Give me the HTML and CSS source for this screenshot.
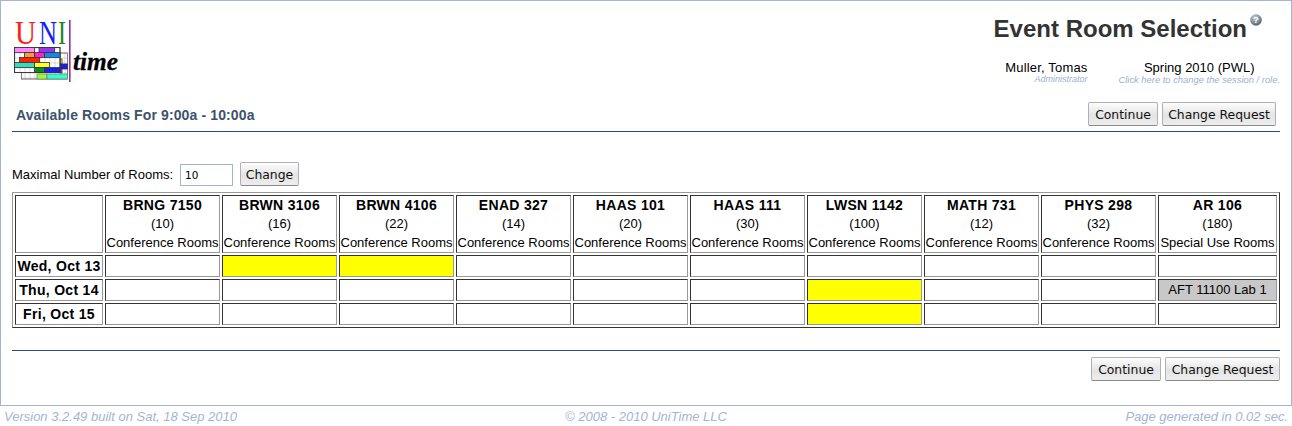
FILE: index.html
```html
<!DOCTYPE html>
<html lang="en">
<head>
<meta charset="utf-8">
<title>Event Room Selection</title>
<link rel="stylesheet" href="styles.css">
</head>
<body>
<div class="frame">
  <header class="top">
    <svg class="logo" width="110" height="72" viewBox="0 -8 110 72">
      <defs>
        <pattern id="cell" width="5" height="5" patternUnits="userSpaceOnUse" x="0.5" y="2.5">
          <path d="M0 0H5M0 0V5" stroke="#999" stroke-width=".7" fill="none"/>
        </pattern>
      </defs>
      <text x="1" y="24" class="uni" fill="#ff2010" textLength="21" lengthAdjust="spacingAndGlyphs">U</text>
      <text x="25" y="24" class="uni" fill="#1020ff" textLength="18" lengthAdjust="spacingAndGlyphs">N</text>
      <text x="44" y="24" class="uni" fill="#1a8a1a" textLength="8" lengthAdjust="spacingAndGlyphs">I</text>
      <rect x="55" y="0" width="1.6" height="62" fill="#8e33a8"/>
      <text x="59" y="50" class="time" textLength="45" lengthAdjust="spacingAndGlyphs">time</text>
      <g stroke="#777" stroke-width=".7">
        <rect x="7.5" y="33" width="46" height="26" fill="#fff"/>
        <rect x="7.5" y="33" width="46" height="26" fill="url(#cell)"/>
        <rect x="23" y="54" width="10" height="5" fill="#9f3"/>
        <rect x="33" y="54" width="20.500" height="5" fill="#3fc"/>
      </g>
      <g stroke="#333" stroke-width=".8">
        <rect x="46" y="39" width="2" height="5" fill="#ff2"/>
        <rect x="46" y="44" width="7.500" height="5" fill="#12e"/>
        <rect x="46" y="49" width="2" height="4" fill="#f2c"/>
        <rect x="0.500" y="27.500" width="45.500" height="25" fill="#fff"/>
        <rect x="0.500" y="27.500" width="45.500" height="25" fill="url(#cell)"/>
        <rect x="0.500" y="27.500" width="20" height="5" fill="#f8f"/>
        <rect x="25" y="27.500" width="15.500" height="5" fill="#93e"/>
        <rect x="10.500" y="32.500" width="10" height="5" fill="#f93"/>
        <rect x="20.500" y="32.500" width="10" height="5" fill="#f2c"/>
        <rect x="30.500" y="32.500" width="15.500" height="5" fill="#18e"/>
        <rect x="5.500" y="37.500" width="20" height="5" fill="#f20"/>
        <rect x="0.500" y="42.500" width="20" height="5" fill="#3db"/>
        <rect x="20.500" y="42.500" width="15" height="5" fill="#ff2"/>
        <rect x="20.500" y="47.500" width="10" height="5" fill="#182"/>
        <rect x="30.500" y="47.500" width="15.500" height="5" fill="#12e"/>
      </g>
    </svg>
    <div class="head-right">
      <h1 class="title">Event Room Selection<svg class="help" width="12" height="12" viewBox="0 0 12 12"><defs><radialGradient id="hg" cx=".4" cy=".3" r=".8"><stop offset="0" stop-color="#c9d1db"/><stop offset="1" stop-color="#46525f"/></radialGradient></defs><circle cx="6" cy="6" r="5.8" fill="url(#hg)"/><text x="6" y="9" class="help-q">?</text></svg></h1>
      <div class="session">
        <div class="who">
          <div class="who-main">Muller, Tomas</div>
          <div class="who-sub">Administrator</div>
        </div>
        <div class="term">
          <div class="who-main">Spring 2010 (PWL)</div>
          <div class="who-sub">Click here to change the session / role.</div>
        </div>
      </div>
    </div>
  </header>

  <div class="section">
    <div class="section-title">Available Rooms For 9:00a - 10:00a</div>
    <div class="actions">
      <button class="btn btn-continue">Continue</button>
      <button class="btn btn-request">Change Request</button>
    </div>
  </div>

  <div class="limit">
    <label class="limit-label">Maximal Number of Rooms:</label>
    <input class="limit-input" value="10">
    <button class="btn btn-change">Change</button>
  </div>

  <table class="rooms">
    <colgroup>
      <col class="c-day"><col class="c-room"><col class="c-room"><col class="c-room"><col class="c-room"><col class="c-room"><col class="c-room"><col class="c-room"><col class="c-room"><col class="c-room"><col class="c-last">
    </colgroup>
    <tr class="r-head">
      <th></th>
      <th><b>BRNG 7150</b><br><span>(10)</span><br><span>Conference Rooms</span></th>
      <th><b>BRWN 3106</b><br><span>(16)</span><br><span>Conference Rooms</span></th>
      <th><b>BRWN 4106</b><br><span>(22)</span><br><span>Conference Rooms</span></th>
      <th><b>ENAD 327</b><br><span>(14)</span><br><span>Conference Rooms</span></th>
      <th><b>HAAS 101</b><br><span>(20)</span><br><span>Conference Rooms</span></th>
      <th><b>HAAS 111</b><br><span>(30)</span><br><span>Conference Rooms</span></th>
      <th><b>LWSN 1142</b><br><span>(100)</span><br><span>Conference Rooms</span></th>
      <th><b>MATH 731</b><br><span>(12)</span><br><span>Conference Rooms</span></th>
      <th><b>PHYS 298</b><br><span>(32)</span><br><span>Conference Rooms</span></th>
      <th><b>AR 106</b><br><span>(180)</span><br><span>Special Use Rooms</span></th>
    </tr>
    <tr>
      <th>Wed, Oct 13</th><td></td><td class="hit"></td><td class="hit"></td><td></td><td></td><td></td><td></td><td></td><td></td><td></td>
    </tr>
    <tr>
      <th>Thu, Oct 14</th><td></td><td></td><td></td><td></td><td></td><td></td><td class="hit"></td><td></td><td></td><td class="busy">AFT 11100 Lab 1</td>
    </tr>
    <tr>
      <th>Fri, Oct 15</th><td></td><td></td><td></td><td></td><td></td><td></td><td class="hit"></td><td></td><td></td><td></td>
    </tr>
  </table>

  <div class="bottom">
    <button class="btn btn-continue">Continue</button>
    <button class="btn btn-request">Change Request</button>
  </div>
</div>
<footer class="foot">
  <span class="foot-cell">Version 3.2.49 built on Sat, 18 Sep 2010</span>
  <span class="foot-cell foot-mid">© 2008 - 2010 UniTime LLC</span>
  <span class="foot-cell foot-end">Page generated in 0.02 sec.</span>
</footer>
</body>
</html>
```

FILE: styles.css
```css
* { box-sizing: border-box; }
html, body { margin: 0; padding: 0; background: #fff; }
body {
  width: 1292px;
  height: 426px;
  overflow: hidden;
  font-family: "Liberation Sans", Arial, sans-serif;
  font-size: 13px;
  color: #000;
}
.frame {
  height: 406px;
  border: 1px solid #a3b5d4;
  padding: 0 11px;
}
.top {
  display: flex;
  justify-content: space-between;
  height: 101px;
}
.logo { margin: 11px 0 0 2px; display: block; }
.uni { font-family: "Liberation Serif", serif; font-size: 34px; }
.time {
  font-family: "Liberation Serif", serif;
  font-size: 25px;
  font-style: italic;
  font-weight: bold;
  stroke: #000;
  stroke-width: .3px;
}
.head-right { display: flex; flex-direction: column; align-items: flex-end; width: 400px; }
.title {
  margin: 13px 18px 0 0;
  font-size: 24px;
  line-height: 29px;
  font-weight: bold;
  color: #333;
  position: relative;
  padding-right: 15px;
  white-space: nowrap;
}
.help { position: absolute; right: 0; top: 0; }
.help-q { font-size: 9px; font-weight: bold; fill: #fff; text-anchor: middle; }
.session { display: flex; margin-top: 17px; gap: 31px; }
.who-main { line-height: 15px; }
.who .who-main { text-align: right; letter-spacing: .17px; }
.term .who-main { text-align: center; }
.who-sub {
  margin-top: -1px;
  font-size: 9.4px;
  line-height: 11px;
  font-style: italic;
  color: #9dafd0;
  text-align: right;
  white-space: nowrap;
}
.who .who-sub { font-size: 9px; }
.section {
  display: flex;
  justify-content: space-between;
  align-items: flex-start;
  border-bottom: 1px solid #2f4a66;
  height: 30px;
  padding-right: 4px;
}
.section-title {
  margin: 5px 0 0 4px;
  font-size: 14px;
  font-weight: bold;
  line-height: 16px;
  color: #3c526c;
  letter-spacing: .12px;
}
.actions, .bottom { display: flex; gap: 4px; }
.btn {
  height: 24px;
  padding: 0;
  border: 1px solid #b0b0b0;
  border-bottom-color: #8a8a8a;
  border-radius: 2px;
  background: linear-gradient(#fdfdfd, #e4e4e4 55%, #ededed);
  font-family: "DejaVu Sans", sans-serif;
  font-size: 12.4px;
  color: #111;
  white-space: nowrap;
}
.btn-continue { width: 70px; }
.btn-request { width: 114px; }
.bottom .btn-request { width: 115px; }
.btn-change { width: 59px; }
.limit {
  display: flex;
  align-items: center;
  margin-top: 30px;
  height: 24px;
}
.limit-label { width: 168px; }
.limit-input {
  width: 53px;
  height: 22px;
  margin-top: 2px;
  border: 1px solid #a3b5d4;
  padding: 0 4px;
  font-family: "DejaVu Sans", sans-serif;
  font-size: 10.5px;
  margin-right: 7px;
}
.rooms {
  margin-top: 6px;
  width: 1268px;
  table-layout: fixed;
  border-collapse: separate;
  border-spacing: 2px;
  border: 1px solid;
  border-color: #999 #333 #333 #999;
}
.c-day { width: 88px; }
.c-room { width: 115px; }
.c-last { width: 119px; }
.rooms th, .rooms td {
  padding: 0;
  border: 1px solid;
  border-color: #333 #999 #999 #333;
  height: 22px;
  text-align: center;
  white-space: nowrap;
  font-size: 13px;
  line-height: 18px;
}
.rooms th { font-weight: bold; font-size: 14px; letter-spacing: .3px; }
.rooms th span { font-weight: normal; font-size: 13px; letter-spacing: 0; }
.r-head th { height: 58px; }
.hit { background: #ff0; }
.busy { background: #c8c8c8; }
.bottom {
  margin-top: 22px;
  padding-top: 6px;
  border-top: 1px solid #2f4a66;
  justify-content: flex-end;
}
.foot {
  display: grid;
  grid-template-columns: 1fr 1fr 1fr;
  padding: 3px 4px 0 4px;
  font-size: 13px;
  line-height: 15px;
  font-style: italic;
  color: #a3b5d4;
}
.foot-mid { text-align: center; }
.foot-end { text-align: right; }
```
